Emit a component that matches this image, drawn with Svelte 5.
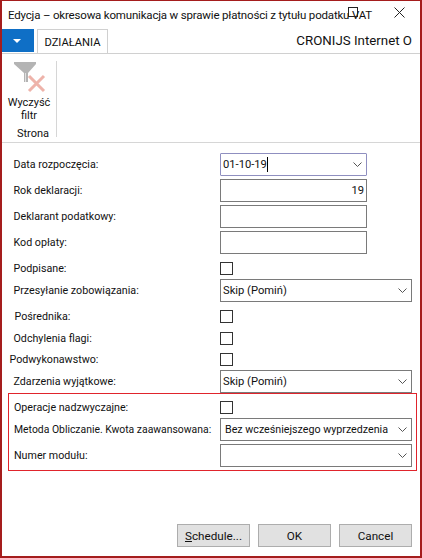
<script>
  // form rows, top to bottom
  const rows = [
    { label: 'Data rozpoczęcia:', kind: 'date', value: '01-10-19', cls: 'first' },
    { label: 'Rok deklaracji:', kind: 'num', value: '19' },
    { label: 'Deklarant podatkowy:', kind: 'text', value: '' },
    { label: 'Kod opłaty:', kind: 'text', value: '' },
    { label: 'Podpisane:', kind: 'check', cls: 'after-input' },
    { label: 'Przesyłanie zobowiązania:', kind: 'select', value: 'Skip (Pomiń)', cls: 'after-check' },
    { label: 'Pośrednika:', kind: 'check', cls: 'after-input in1' },
    { label: 'Odchylenia flagi:', kind: 'check', cls: 'check-gap' },
    { label: 'Podwykonawstwo:', kind: 'check', cls: 'check-gap-s out' },
    { label: 'Zdarzenia wyjątkowe:', kind: 'select', value: 'Skip (Pomiń)', cls: 'after-check' }
  ];
  const marked = [
    { label: 'Operacje nadzwyczajne:', kind: 'check', cls: 'first' },
    { label: 'Metoda Obliczanie. Kwota zaawansowana:', kind: 'select', value: 'Bez wcześniejszego wyprzedzenia', cls: 'after-check small' },
    { label: 'Numer modułu:', kind: 'select', value: '', cls: '' }
  ];
</script>

{#snippet row(r)}
  <div class="row {r.cls ?? ''}">
    <span class="label">{r.label}</span>
    {#if r.kind === 'check'}
      <span class="check"></span>
    {:else}
      <div class="field {r.kind}">
        <span class="val">{r.value}</span>
        {#if r.kind === 'date'}<span class="caret"></span>{/if}
        {#if r.kind === 'date' || r.kind === 'select'}
          <svg class="chev" width="9" height="5" viewBox="0 0 9 5"><path d="M.5.5l4 4 4-4" fill="none" stroke="#555" /></svg>
        {/if}
      </div>
    {/if}
  </div>
{/snippet}

<div class="window">
  <header class="title">
    <span>Edycja – okresowa komunikacja w sprawie płatności z tytułu podatku VAT</span>
    <span class="max"></span>
    <svg class="close" width="11" height="11" viewBox="0 0 11 11"><path d="M.5.5l10 10M10.5.5l-10 10" stroke="#222" fill="none" /></svg>
  </header>

  <div class="tabs">
    <button class="menu" aria-label="menu"><span class="tri"></span></button>
    <div class="tab">DZIAŁANIA</div>
    <div class="company">CRONIJS Internet O</div>
  </div>

  <div class="ribbon">
    <div class="group">
      <svg width="34" height="32" viewBox="0 0 34 32">
        <path d="M1 1h22v2l-8 9v9h-4v-9L1 3z" fill="#b4b4b4" />
        <path d="M12.5 12v9" stroke="#e2e2e2" />
        <path d="M16 15l15 15M31 15L16 30" stroke="#eeb3aa" stroke-width="3" fill="none" />
      </svg>
      <div class="action">Wyczyść<br />filtr</div>
      <div class="group-name">Strona</div>
    </div>
  </div>

  <main class="form">
    {#each rows as r}
      {@render row(r)}
    {/each}
    <section class="marked">
      {#each marked as r}
        {@render row(r)}
      {/each}
    </section>
  </main>

  <footer class="buttons">
    <button><u>S</u>chedule...</button>
    <button>OK</button>
    <button>Cancel</button>
  </footer>
</div>

<style>
  :global(body) {
    margin: 0;
    background: #fff;
  }
  .window {
    box-sizing: border-box;
    width: 422px;
    height: 558px;
    border: 1px solid #a51d1d;
    border-width: 1px 2px 2px 2px;
    display: flex;
    flex-direction: column;
    font-family: Roboto, "Liberation Sans", sans-serif;
    font-size: 10.7px;
    color: #111;
    background: #fff;
    overflow: hidden;
  }
  .title {
    height: 28px;
    flex: none;
    position: relative;
    display: flex;
    align-items: center;
    padding-left: 6px;
    white-space: nowrap;
    font-size: 11.5px;
    letter-spacing: -0.18px;
  }
  .max {
    position: absolute;
    left: 346px;
    top: 6px;
    width: 8px;
    height: 8px;
    border: 1px solid #222;
  }
  .close {
    position: absolute;
    left: 392px;
    top: 6px;
  }
  .tabs {
    height: 24px;
    flex: none;
    display: flex;
    align-items: stretch;
    border-bottom: 1px solid #d0d0d0;
    margin-left: -2px;
  }
  .menu {
    width: 34px;
    height: 23px;
    padding: 0;
    border: 0;
    background: #0f6fc6;
    display: flex;
    align-items: center;
    justify-content: center;
  }
  .tri {
    width: 0;
    height: 0;
    border: 4px solid transparent;
    border-top: 4px solid #fff;
    border-bottom: 0;
  }
  .tab {
    box-sizing: border-box;
    width: 71px;
    height: 24px;
    margin-left: 3px;
    border: 1px solid #d0d0d0;
    border-bottom: 0;
    background: #fff;
    text-align: center;
    line-height: 25px;
    font-size: 11.2px;
  }
  .company {
    margin-left: auto;
    padding-right: 8px;
    font-size: 13.3px;
    line-height: 23px;
  }
  .ribbon {
    height: 89px;
    flex: none;
    border-bottom: 1px solid #d6d6d6;
    box-sizing: border-box;
    padding-top: 7px;
    display: flex;
  }
  .group {
    width: 55px;
    height: 76px;
    border-right: 1px solid #d6d6d6;
    text-align: center;
    font-size: 11px;
    line-height: 13px;
    box-sizing: border-box;
  }
  .group svg {
    display: block;
    margin-left: 11px;
  }
  .action {
    margin-top: 3px;
  }
  .group-name {
    margin-top: 5px;
    padding-left: 8px;
  }
  .form {
    flex: 1;
    padding-top: 10px;
  }
  .row {
    display: grid;
    grid-template-columns: 206.5px auto;
    justify-content: start;
    align-items: center;
    margin-top: 3px;
    padding-left: 11.5px;
  }
  .label {
    white-space: nowrap;
    line-height: 12px;
    padding-top: 1px;
  }
  .row.first {
    margin-top: 0;
  }
  .row.after-input {
    margin-top: 8px;
  }
  .row.after-check {
    margin-top: 4px;
  }
  .row.check-gap {
    margin-top: 9px;
  }
  .row.check-gap-s {
    margin-top: 8px;
  }
  .in1 .label {
    margin-left: 1px;
  }
  .out .label {
    margin-left: -4px;
  }
  .small .label {
    font-size: 10.4px;
  }
  .check {
    box-sizing: border-box;
    width: 13px;
    height: 13px;
    border: 1px solid #333;
    display: block;
  }
  .field {
    box-sizing: border-box;
    height: 23px;
    border: 1px solid #7a7a7a;
    display: flex;
    align-items: center;
    padding: 0 2px;
    position: relative;
    width: 147px;
    font-size: 11.2px;
  }
  .select {
    width: 192px;
  }
  .small .select {
    font-size: 10.7px;
  }
  .small .val {
    margin-left: 2px;
  }
  .date {
    border-color: #8f8fc0;
    border-radius: 1px;
  }
  .num {
    justify-content: flex-end;
  }
  .caret {
    width: 1px;
    height: 15px;
    background: #000;
  }
  .chev {
    position: absolute;
    right: 4px;
    top: 8px;
  }
  .marked {
    box-sizing: border-box;
    width: 409px;
    height: 78px;
    margin: 0 0 0 6px;
    border: 1px solid #e0242c;
    padding-top: 7px;
  }
  .marked .row {
    padding-left: 5px;
    grid-template-columns: 206px auto;
  }
  .buttons {
    flex: none;
    display: flex;
    justify-content: flex-end;
    gap: 8px;
    padding: 0 8px 9px 0;
  }
  .buttons button {
    box-sizing: border-box;
    width: 73px;
    height: 23px;
    background: #e1e1e1;
    border: 1px solid #adadad;
    font: inherit;
    font-size: 11.7px;
    color: #111;
    padding: 0;
  }
</style>
